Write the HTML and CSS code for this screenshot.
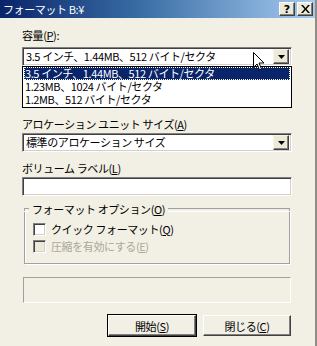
FILE: index.html
```html
<!DOCTYPE html>
<html lang="ja">
<head>
<meta charset="utf-8">
<link rel="stylesheet" href="styles.css">
</head>
<body>
<div class="win">
  <div class="titlebar">
    <span class="title">フォーマット B:¥</span>
    <div class="tbtns">
      <span class="tbtn">?</span>
      <span class="tbtn x">
        <svg width="9" height="8" viewBox="0 0 9 8"><path d="M0 0h2l2.5 3 2.5-3h2L5.5 4 9 8H7L4.5 5 2 8H0l3.5-4z" fill="#000"/></svg>
      </span>
    </div>
  </div>
  <div class="body">
    <div class="label l1">容量(<u>P</u>):</div>
    <div class="combo-wrap">
      <div class="combo">
        <span class="ctext">3.5 インチ、1.44MB、512 バイト/セクタ</span>
        <span class="dbtn"><svg width="7" height="4" viewBox="0 0 7 4"><path d="M0 0h7L3.5 4z" fill="#000"/></svg></span>
      </div>
      <div class="dropdown">
        <div class="opt sel">3.5 インチ、1.44MB、512 バイト/セクタ</div>
        <div class="opt">1.23MB、1024 バイト/セクタ</div>
        <div class="opt">1.2MB、512 バイト/セクタ</div>
      </div>
      <svg class="cursor" width="12" height="19" viewBox="0 0 12 19"><path d="M0.5 0.5v15l3.5-3.5 2.5 6 2-1-2.5-6h5z" fill="#fff" stroke="#000" stroke-width="1"/></svg>
    </div>
    <div class="label l2">アロケーション ユニット サイズ(<u>A</u>)</div>
    <div class="combo">
      <span class="ctext">標準のアロケーション サイズ</span>
      <span class="dbtn"><svg width="7" height="4" viewBox="0 0 7 4"><path d="M0 0h7L3.5 4z" fill="#000"/></svg></span>
    </div>
    <div class="label l3">ボリューム ラベル(<u>L</u>)</div>
    <div class="textbox"></div>
    <div class="group">
      <div class="legend"><span>フォーマット オプション(<u>O</u>)</span></div>
      <div class="gbody">
        <div class="chk"><span class="box"></span><span>クイック フォーマット(<u>Q</u>)</span></div>
        <div class="chk dis"><span class="box"></span><span>圧縮を有効にする(<u>E</u>)</span></div>
      </div>
    </div>
    <div class="progress"></div>
    <div class="buttons">
      <span class="btn def"><span>開始(<u>S</u>)</span></span>
      <span class="btn"><span>閉じる(<u>C</u>)</span></span>
    </div>
  </div>
</div>
</body>
</html>
```
FILE: styles.css
```css
* { box-sizing: border-box; }
html, body { margin: 0; padding: 0; }
body {
  width: 317px; height: 346px; overflow: hidden;
  background: #f2efe4;
  font-family: "Noto Sans CJK JP", "Noto Sans", sans-serif;
  font-size: 11px; letter-spacing: -0.4px; color: #000;
  text-autospace: no-autospace;
}
u { text-decoration: underline; text-underline-offset: 1px; }
.win {
  width: 317px; height: 346px;
  border-right: 2px solid #8f8d86;
  display: flex; flex-direction: column;
}
.titlebar {
  height: 18px;
  background: linear-gradient(to right, #0a246a 0%, #3a6ea5 45%, #a6caf0 100%);
  display: flex; align-items: center; justify-content: space-between;
  padding: 0 2px 0 3px;
}
.title { color: #fff; line-height: 18px; }
.tbtns { display: flex; gap: 2px; }
.tbtn {
  width: 16px; height: 14px;
  background: #ece9d8;
  border: 1px solid; border-color: #fff #404040 #404040 #fff;
  box-shadow: inset -1px -1px 0 #808080;
  display: flex; align-items: center; justify-content: center;
  font-family: "DejaVu Sans", sans-serif; font-weight: bold; font-size: 11px; line-height: 1; letter-spacing: 0;
}
.body { padding: 10px 0 0 22px; width: 291px; }
.label { height: 14px; line-height: 14px; }
.l1 { margin-bottom: 5px; }
.l2 { margin-top: 51px; margin-bottom: 2px; }
.l3 { margin-top: 9px; margin-bottom: 2px; }
.combo-wrap { position: relative; }
.combo, .textbox {
  height: 19px; width: 270px;
  background: #fff;
  border: 1px solid; border-color: #808080 #fff #fff #808080;
  box-shadow: inset 1px 1px 0 #404040, inset -1px -1px 0 #d4d0c8;
  display: flex; align-items: center; justify-content: space-between;
  padding: 0 2px 0 3px;
}
.ctext { line-height: 15px; }
.dbtn {
  width: 16px; height: 15px;
  background: #ece9d8;
  border: 1px solid; border-color: #f5f4ea #404040 #404040 #f5f4ea;
  box-shadow: inset -1px -1px 0 #808080;
  display: flex; align-items: center; justify-content: center;
}
.dropdown {
  position: absolute; left: 0; top: 19px; width: 270px;
  background: #fff; border: 1px solid #000;
  padding: 0 1px 1px;
  z-index: 2;
}
.opt { height: 13px; line-height: 13px; padding-left: 1px; white-space: nowrap; }
.opt.sel { background: #0a246a; color: #fff; outline: 1px dotted #fff; outline-offset: -1px; }
.cursor { position: absolute; left: 231px; top: 5px; z-index: 3; }
.textbox { margin-bottom: 6px; }
.group { width: 266px; margin-left: 2px; }
.legend {
  display: flex; align-items: center; height: 14px; line-height: 14px;
}
.legend::before {
  content: ""; width: 5px; height: 2px; margin-right: 3px;
  border-top: 1px solid #a0a0a0; border-bottom: 1px solid #fff; margin-top: 1px;
}
.legend::after {
  content: ""; flex: 1; height: 2px; margin-left: 3px;
  border-top: 1px solid #a0a0a0; border-bottom: 1px solid #fff; margin-top: 1px;
}
.gbody {
  margin-top: -7px; height: 55px;
  border: 1px solid #a0a0a0; border-top: none;
  box-shadow: 1px 1px 0 #fff, inset 1px 0 0 #fff;
  padding: 12px 8px 0 8px;
  display: flex; flex-direction: column; gap: 1px;
}
.chk { display: flex; align-items: center; height: 16px; gap: 5px; }
.chk .box {
  width: 13px; height: 13px; background: #fff;
  border: 1px solid; border-color: #808080 #fff #fff #808080;
  box-shadow: inset 1px 1px 0 #404040, inset -1px -1px 0 #d4d0c8;
}
.chk.dis { color: #aca899; }
.chk.dis .box { background: #ece9d8; }
.progress {
  margin-top: 13px; width: 268px; height: 26px; margin-left: 1px;
  border: 1px solid; border-color: #a0a0a0 #fff #fff #a0a0a0;
}
.buttons { display: flex; justify-content: flex-end; gap: 7px; margin-top: 12px; width: 269px; }
.btn {
  width: 88px; height: 21px;
  background: #f2efe4;
  border: 1px solid; border-color: #fff #404040 #404040 #fff;
  box-shadow: inset -1px -1px 0 #808080;
  display: flex; align-items: center; justify-content: center; line-height: 14px;
}
.btn.def { outline: 1px solid #000; outline-offset: 0; }
```
